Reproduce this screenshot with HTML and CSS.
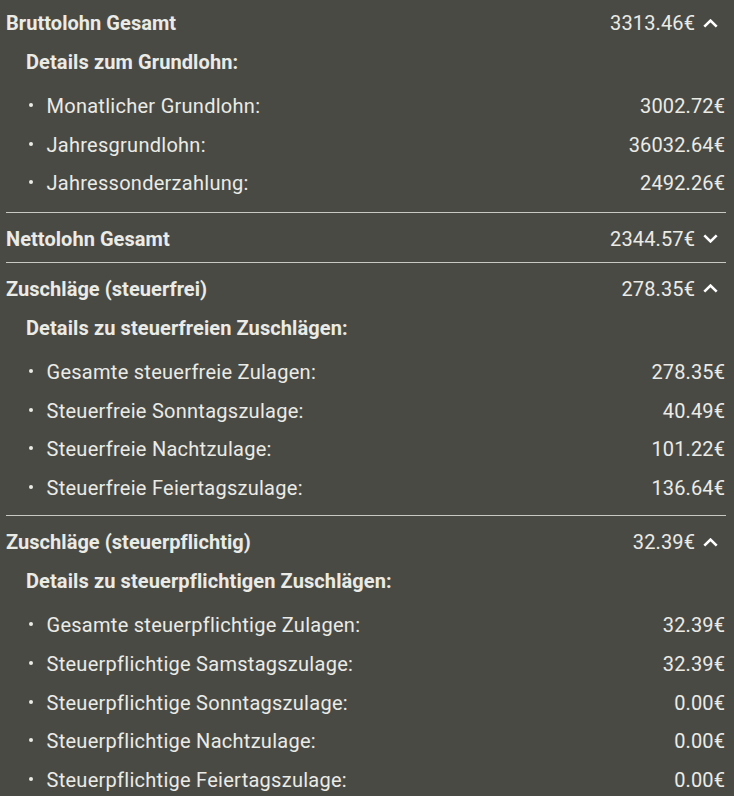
FILE: index.html
```html
<!DOCTYPE html>
<html lang="de">
<head>
<meta charset="utf-8">
<title>Lohnübersicht</title>
<link rel="stylesheet" href="styles.css">
</head>
<body>
<div class="panel">
  <section class="sect first">
    <div class="head">
      <span class="title">Bruttolohn Gesamt</span>
      <span class="total">3313.46€</span>
      <svg class="chev" width="15" height="9" viewBox="0 0 15 9"><polyline points="1.3,7.6 7.5,1.6 13.7,7.6" fill="none" stroke="currentColor" stroke-width="2.6"/></svg>
    </div>
    <div class="details">Details zum Grundlohn:</div>
    <ul class="items">
      <li><span class="dot"></span><span class="label">Monatlicher Grundlohn:</span><span class="val">3002.72€</span></li>
      <li><span class="dot"></span><span class="label">Jahresgrundlohn:</span><span class="val">36032.64€</span></li>
      <li><span class="dot"></span><span class="label">Jahressonderzahlung:</span><span class="val">2492.26€</span></li>
    </ul>
  </section>
  <section class="sect">
    <div class="head">
      <span class="title">Nettolohn Gesamt</span>
      <span class="total">2344.57€</span>
      <svg class="chev" width="15" height="9" viewBox="0 0 15 9"><polyline points="1.3,1.4 7.5,7.4 13.7,1.4" fill="none" stroke="currentColor" stroke-width="2.6"/></svg>
    </div>
  </section>
  <section class="sect">
    <div class="head">
      <span class="title">Zuschläge (steuerfrei)</span>
      <span class="total">278.35€</span>
      <svg class="chev" width="15" height="9" viewBox="0 0 15 9"><polyline points="1.3,7.6 7.5,1.6 13.7,7.6" fill="none" stroke="currentColor" stroke-width="2.6"/></svg>
    </div>
    <div class="details">Details zu steuerfreien Zuschlägen:</div>
    <ul class="items">
      <li><span class="dot"></span><span class="label">Gesamte steuerfreie Zulagen:</span><span class="val">278.35€</span></li>
      <li><span class="dot"></span><span class="label">Steuerfreie Sonntagszulage:</span><span class="val">40.49€</span></li>
      <li><span class="dot"></span><span class="label">Steuerfreie Nachtzulage:</span><span class="val">101.22€</span></li>
      <li><span class="dot"></span><span class="label">Steuerfreie Feiertagszulage:</span><span class="val">136.64€</span></li>
    </ul>
  </section>
  <section class="sect">
    <div class="head">
      <span class="title">Zuschläge (steuerpflichtig)</span>
      <span class="total">32.39€</span>
      <svg class="chev" width="15" height="9" viewBox="0 0 15 9"><polyline points="1.3,7.6 7.5,1.6 13.7,7.6" fill="none" stroke="currentColor" stroke-width="2.6"/></svg>
    </div>
    <div class="details">Details zu steuerpflichtigen Zuschlägen:</div>
    <ul class="items">
      <li><span class="dot"></span><span class="label">Gesamte steuerpflichtige Zulagen:</span><span class="val">32.39€</span></li>
      <li><span class="dot"></span><span class="label">Steuerpflichtige Samstagszulage:</span><span class="val">32.39€</span></li>
      <li><span class="dot"></span><span class="label">Steuerpflichtige Sonntagszulage:</span><span class="val">0.00€</span></li>
      <li><span class="dot"></span><span class="label">Steuerpflichtige Nachtzulage:</span><span class="val">0.00€</span></li>
      <li><span class="dot"></span><span class="label">Steuerpflichtige Feiertagszulage:</span><span class="val">0.00€</span></li>
    </ul>
  </section>
</div>
</body>
</html>
```

FILE: styles.css
```css
html, body {
  margin: 0;
  padding: 0;
  background: #4a4a45;
}
body {
  font-family: Roboto, "Liberation Sans", sans-serif;
  font-size: 20px;
  line-height: 24px;
  color: #ebebe6;
  height: 796px;
  overflow: hidden;
}
.panel {
  padding: 0 8px 0 6px;
}
.sect {
  border-top: 1px solid #c9c9c4;
  padding-bottom: 8px;
}
.sect.first {
  border-top: none;
  padding-bottom: 9px;
}
.head {
  display: flex;
  align-items: center;
  padding: 14px 0 3px;
}
.sect.first .head {
  padding-top: 11px;
}
.title {
  flex: 1;
  font-weight: 700;
  letter-spacing: 0.05px;
}
.total {
  font-weight: 400;
  letter-spacing: 0.12px;
}
.chev {
  margin: 0 8px 0 8px;
  color: #ffffff;
}
.details {
  margin: 12px 0 0 20px;
  font-weight: 700;
  letter-spacing: 0.1px;
}
.items {
  list-style: none;
  margin: 13px 0 0 0;
  padding: 0 0 0 20px;
}
.items li {
  display: flex;
  align-items: center;
  padding: 7.3px 0;
}
.dot {
  width: 4px;
  height: 4px;
  border-radius: 50%;
  background: #ebebe6;
  margin: 0 14px 0 2.5px;
  position: relative;
  top: -1px;
}
.label {
  flex: 1;
  letter-spacing: 0.27px;
}
.val {
  margin-right: 1px;
  letter-spacing: 0.12px;
}
```
